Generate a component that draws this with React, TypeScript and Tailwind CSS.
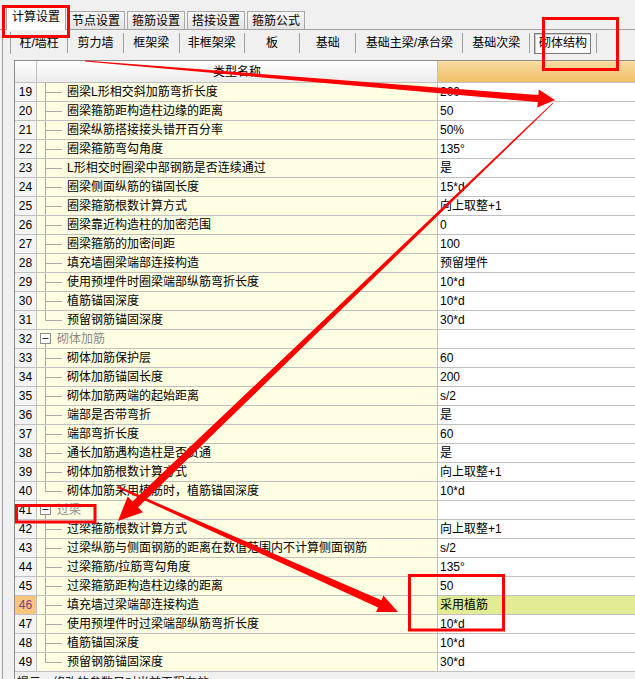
import React from 'react'

type Row = {
  n: number
  name: string
  value?: string
  group?: boolean
  tree?: 'mid' | 'last'
}

const rows: Row[] = [
  { n: 19, name: '圈梁L形相交斜加筋弯折长度', value: '200', tree: 'mid' },
  { n: 20, name: '圈梁箍筋距构造柱边缘的距离', value: '50', tree: 'mid' },
  { n: 21, name: '圈梁纵筋搭接接头错开百分率', value: '50%', tree: 'mid' },
  { n: 22, name: '圈梁箍筋弯勾角度', value: '135°', tree: 'mid' },
  { n: 23, name: 'L形相交时圈梁中部钢筋是否连续通过', value: '是', tree: 'mid' },
  { n: 24, name: '圈梁侧面纵筋的锚固长度', value: '15*d', tree: 'mid' },
  { n: 25, name: '圈梁箍筋根数计算方式', value: '向上取整+1', tree: 'mid' },
  { n: 26, name: '圈梁靠近构造柱的加密范围', value: '0', tree: 'mid' },
  { n: 27, name: '圈梁箍筋的加密间距', value: '100', tree: 'mid' },
  { n: 28, name: '填充墙圈梁端部连接构造', value: '预留埋件', tree: 'mid' },
  { n: 29, name: '使用预埋件时圈梁端部纵筋弯折长度', value: '10*d', tree: 'mid' },
  { n: 30, name: '植筋锚固深度', value: '10*d', tree: 'mid' },
  { n: 31, name: '预留钢筋锚固深度', value: '30*d', tree: 'last' },
  { n: 32, name: '砌体加筋', group: true },
  { n: 33, name: '砌体加筋保护层', value: '60', tree: 'mid' },
  { n: 34, name: '砌体加筋锚固长度', value: '200', tree: 'mid' },
  { n: 35, name: '砌体加筋两端的起始距离', value: 's/2', tree: 'mid' },
  { n: 36, name: '端部是否带弯折', value: '是', tree: 'mid' },
  { n: 37, name: '端部弯折长度', value: '60', tree: 'mid' },
  { n: 38, name: '通长加筋遇构造柱是否贯通', value: '是', tree: 'mid' },
  { n: 39, name: '砌体加筋根数计算方式', value: '向上取整+1', tree: 'mid' },
  { n: 40, name: '砌体加筋采用植筋时，植筋锚固深度', value: '10*d', tree: 'last' },
  { n: 41, name: '过梁', group: true },
  { n: 42, name: '过梁箍筋根数计算方式', value: '向上取整+1', tree: 'mid' },
  { n: 43, name: '过梁纵筋与侧面钢筋的距离在数值范围内不计算侧面钢筋', value: 's/2', tree: 'mid' },
  { n: 44, name: '过梁箍筋/拉筋弯勾角度', value: '135°', tree: 'mid' },
  { n: 45, name: '过梁箍筋距构造柱边缘的距离', value: '50', tree: 'mid' },
  { n: 46, name: '填充墙过梁端部连接构造', value: '采用植筋', tree: 'mid' },
  { n: 47, name: '使用预埋件时过梁端部纵筋弯折长度', value: '10*d', tree: 'mid' },
  { n: 48, name: '植筋锚固深度', value: '10*d', tree: 'mid' },
  { n: 49, name: '预留钢筋锚固深度', value: '30*d', tree: 'last' },
]

const topTabs = ['节点设置', '箍筋设置', '搭接设置', '箍筋公式']

const subTabs: [string, string][] = [
  ['柱/墙柱', 'w-[59px]'],
  ['剪力墙', 'w-[57px]'],
  ['框架梁', 'w-[58px]'],
  ['非框架梁', 'w-[67px]'],
  ['板', 'w-[57px]'],
  ['基础', 'w-[58px]'],
  ['基础主梁/承台梁', 'w-[111px]'],
  ['基础次梁', 'w-[69px]'],
]

const SELECTED = 46

// tapered arrow: thin at the start, thick near the head
function arrowPoints(x0: number, y0: number, x1: number, y1: number, w0: number, w1: number, hl: number, hw: number) {
  const len = Math.hypot(x1 - x0, y1 - y0)
  const dx = (x1 - x0) / len
  const dy = (y1 - y0) / len
  const nx = -dy
  const ny = dx
  const bx = x1 - dx * hl
  const by = y1 - dy * hl
  const p = [
    [x0 + (nx * w0) / 2, y0 + (ny * w0) / 2],
    [bx + (nx * w1) / 2, by + (ny * w1) / 2],
    [bx + nx * hw, by + ny * hw],
    [x1, y1],
    [bx - nx * hw, by - ny * hw],
    [bx - (nx * w1) / 2, by - (ny * w1) / 2],
    [x0 - (nx * w0) / 2, y0 - (ny * w0) / 2],
  ]
  return p.map((q) => q.map((v) => v.toFixed(1)).join(',')).join(' ')
}

function Tree({ row }: { row: Row }) {
  if (row.group) {
    return (
      <svg width="20" height="18" className="shrink-0 overflow-visible">
        <rect x="3.5" y="3.5" width="10" height="10" fill="#fbfbfb" stroke="#8c8c8c" />
        <line x1="5.5" y1="8.5" x2="11.5" y2="8.5" stroke="#303030" />
        <line x1="8.5" y1="14" x2="8.5" y2="19" stroke="#a8a8a8" />
      </svg>
    )
  }
  return (
    <svg width="30" height="18" className="shrink-0 overflow-visible">
      <line x1="8.5" y1="-1" x2="8.5" y2={row.tree === 'last' ? 9.5 : 19} stroke="#a8a8a8" />
      <line x1="8.5" y1="9.5" x2="25" y2="9.5" stroke="#a8a8a8" />
    </svg>
  )
}

export default function App() {
  return (
    <div className="relative w-[635px] h-[679px] overflow-hidden bg-[#f0f0f0] text-[12px] leading-none text-black font-['Liberation_Sans','Noto_Sans_CJK_SC',sans-serif]">
      {/* top tabs */}
      <div className="flex items-end h-[30px] pl-[6px] border-b border-[#a0a0a0]">
        <div className="relative -mb-px flex items-center justify-center w-[60px] h-[23px] pb-[4px] bg-white border border-b-0 border-[#a0a0a0]">
          计算设置
        </div>
        <div className="flex items-end gap-[2px] ml-[1px]">
          {topTabs.map((t) => (
            <div
              key={t}
              className="flex items-center justify-center w-[58px] h-[18px] pt-px bg-linear-to-b from-[#f7f7f7] to-[#e3e3e3] border border-b-0 border-[#a8a8a8]"
            >
              {t}
            </div>
          ))}
        </div>
      </div>

      {/* body panel */}
      <div className="ml-[2px] border-l border-[#a0a0a0] h-[649px]">
        {/* sub tabs */}
        <div className="flex items-center h-[26px] pl-[7px]">
          <div className="w-px h-[22px] bg-[#a0a0a0]" />
          {subTabs.map(([t, w]) => (
            <React.Fragment key={t}>
              <div className={`${w} flex items-center justify-center h-[20px]`}>{t}</div>
              <div className="w-px h-[20px] bg-[#a0a0a0]" />
            </React.Fragment>
          ))}
          <div className="w-[69px] flex items-center justify-center h-[20px]">
            <div className="flex items-center justify-center w-[57px] h-[21px] bg-[#fbfbfb] border border-[#7a7a7a] shadow-[inset_1px_1px_0_#c8c8c8]">
              砌体结构
            </div>
          </div>
          <div className="w-px h-[20px] bg-[#a0a0a0]" />
          <div className="w-[40px]" />
        </div>

        {/* grid */}
        <div className="mt-[4px] ml-[11px] w-[640px] border-t border-l border-[#8c8c8c]">
          <div className="flex h-[22px] border-b border-[#c0c0c0]">
            <div className="w-[22px] shrink-0 border-r border-[#c0c0c0] bg-linear-to-b from-white to-[#ebebeb]" />
            <div className="w-[401px] shrink-0 flex items-center justify-center border-r border-[#c0c0c0] bg-linear-to-b from-white to-[#ebebeb]">
              类型名称
            </div>
            <div className="flex-1 bg-linear-to-b from-[#f8dca2] to-[#efbf66]" />
          </div>
          {rows.map((r) => {
            const sel = r.n === SELECTED
            return (
              <div key={r.n} className="flex h-[19px] border-b border-[#c0c0c0]">
                <div
                  className={`w-[22px] shrink-0 flex items-center justify-center border-r border-[#c0c0c0] ${
                    sel ? 'bg-[#f8c57c] text-[#7b3f86]' : 'bg-[#f4f4f4]'
                  }`}
                >
                  {r.n}
                </div>
                <div className="w-[401px] shrink-0 flex items-center border-r border-[#c0c0c0] bg-[#fefee3] whitespace-nowrap overflow-hidden">
                  <Tree row={r} />
                  <span className={r.group ? 'text-[#8a8a8a]' : ''}>{r.name}</span>
                </div>
                <div className={`flex-1 flex items-center pl-[2px] ${sel ? 'bg-[#e1ec95]' : 'bg-white'}`}>
                  {r.value}
                </div>
              </div>
            )
          })}
          <div className="pl-[2px] pt-[5px] text-[#202020] whitespace-nowrap">提示：修改的参数只对当前工程有效</div>
        </div>
      </div>

      {/* red annotations */}
      <svg width="635" height="679" className="absolute inset-0 pointer-events-none">
        <g fill="none" stroke="#ff0000" strokeWidth="3">
          <rect x="3.5" y="6.5" width="65" height="30" />
          <rect x="543.5" y="18.5" width="74" height="51" />
          <rect x="16.5" y="505.5" width="78.5" height="16.5" />
          <rect x="409.5" y="575.5" width="94" height="54.5" />
        </g>
        <g fill="#ff0000">
          <polygon points={arrowPoints(85, 61, 555, 100, 1, 7, 17, 9)} />
          <polygon points={arrowPoints(553, 103, 118, 521, 0.8, 8, 24, 11)} />
          <polygon points={arrowPoints(118, 487, 398, 612, 2, 8, 20, 9)} />
        </g>
      </svg>
    </div>
  )
}
